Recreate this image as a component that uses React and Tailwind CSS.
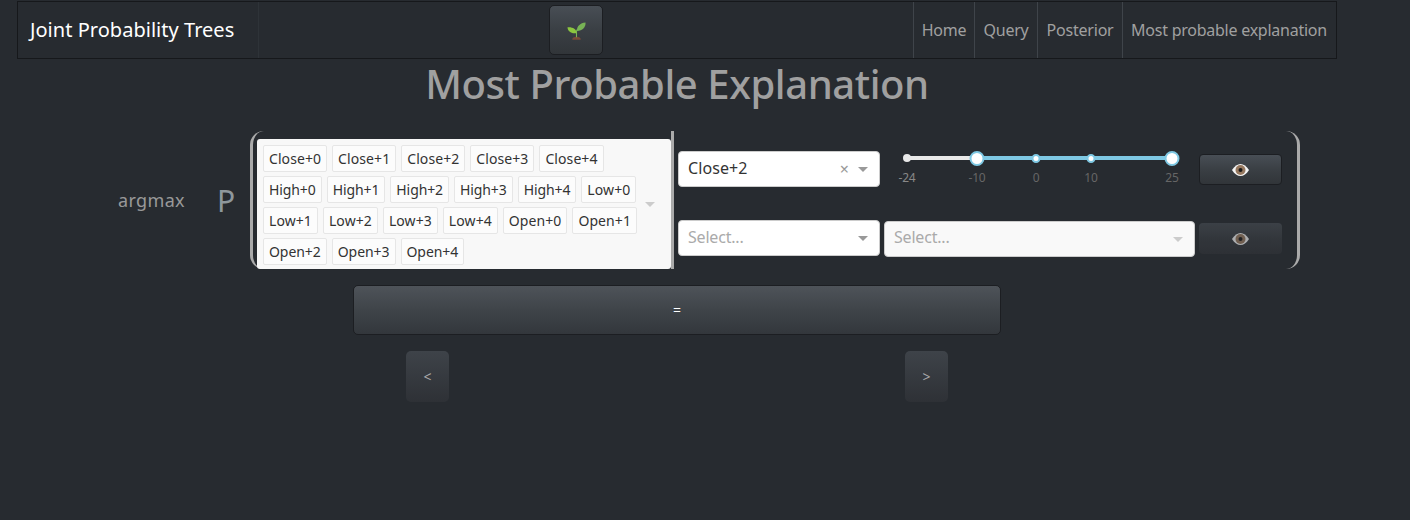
import React from "react";

const tagRows = [
  ["Close+0", "Close+1", "Close+2", "Close+3", "Close+4"],
  ["High+0", "High+1", "High+2", "High+3", "High+4", "Low+0"],
  ["Low+1", "Low+2", "Low+3", "Low+4", "Open+0", "Open+1"],
  ["Open+2", "Open+3", "Open+4"],
];

const tagTracking = (t) => {
  if (t.startsWith("High")) return "tracking-[-0.1px]";
  if (t === "Open+2" || t === "Open+3" || t === "Open+4") return "tracking-[-0.06px]";
  return "";
};

const Caret = ({ color = "#999" }) => (
  <svg width="10" height="5" viewBox="0 0 10 5" className="shrink-0">
    <path d="M0 0H10L5 5Z" fill={color} />
  </svg>
);

const Seedling = () => (
  <svg width="19" height="19" viewBox="0 0 36 36">
    <path d="M26 35c0-3-3-5-8-5s-8 2-8 5c0 1 16 1 16 0z" fill="#7a4a38" />
    <path d="M17 31V20c0-2 1-4 2-5l1.500 1c-1 1-1.500 3-1.500 4v11z" fill="#77b255" />
    <path d="M18 23C18 15 10 11 1 12c0 8 8 13 17 11z" fill="#8cc63f" />
    <path d="M19 19C18 10 25 4 35 3c1 9-6 16-16 16z" fill="#77b255" />
  </svg>
);

const Eye = () => (
  <svg width="17" height="12" viewBox="0 0 17 12">
    <path d="M0 6C2.500 2 5.500 0 8.500 0s6 2 8.500 6c-2.500 4-5.500 6-8.500 6S2.500 10 0 6z" fill="#f5f5f5" />
    <circle cx="8.500" cy="6" r="5" fill="#96785f" />
    <circle cx="8.500" cy="6" r="2" fill="#1a1a1a" />
  </svg>
);

const Mark = ({ x, label, big }) => (
  <>
    <span
      className={
        big
          ? "absolute top-0 w-[15px] h-[15px] -translate-x-1/2 rounded-full bg-white border-[2px] border-[#7ec8e3]"
          : "absolute top-[3px] w-[9px] h-[9px] -translate-x-1/2 rounded-full bg-white border-[2px] border-[#7ec8e3]"
      }
      style={{ left: x }}
    />
    <span className="absolute top-[20px] -translate-x-1/2 text-[12px] leading-[14px] text-[#666]" style={{ left: x }}>
      {label}
    </span>
  </>
);

export default function App() {
  return (
    <div className="min-h-[520px] bg-[#272b30] font-['Noto_Sans',sans-serif] text-[#999] tracking-[-0.2px]">
      <div className="w-[1320px] ml-[17px] pt-px">
        <nav className="h-[58px] flex items-stretch border border-[#16181b]">
          <div className="w-[241px] flex items-center pl-[12px] border-r border-[#2e3338] text-[20px] text-white tracking-[0.03px]">
            Joint Probability Trees
          </div>
          <div className="ml-[290px] flex items-center">
            <button className="shrink-0 w-[54px] h-[50px] flex items-center justify-center rounded-[5px] border border-[#1c1e22] bg-gradient-to-b from-[#484e55] via-[#3a3f44] to-[#313539]">
              <Seedling />
            </button>
          </div>
          <div className="ml-auto flex text-[16px] text-[#a0a0a0]">
            {[
              ["Home", "w-[61px]"],
              ["Query", "w-[63px]"],
              ["Posterior", "w-[85px]"],
              ["Most probable explanation", "w-[214px] pr-px tracking-[-0.25px]"],
            ].map(([t, w]) => (
              <div key={t} className={`${w} flex items-center justify-center border-l border-[#3f444a] whitespace-nowrap`}>
                {t}
              </div>
            ))}
          </div>
        </nav>

        <h1 className="h-[50px] leading-[49px] mb-[22px] text-center text-[40px] font-medium text-[#a0a0a0] tracking-[-0.42px]">
          Most Probable Explanation
        </h1>

        <div className="flex items-center ml-[101px]">
          <div className="w-[100px] text-[18px] tracking-[0.35px]">argmax</div>
          <div className="w-[32px] text-[30px] text-[#8e979c] -ml-px mr-px">P</div>
          <div className="w-[1050px] h-[138px] flex rounded-[14px] border-x-[3px] border-[#aaa]">
            <div className="ml-[4px] w-[417px] flex border-r-[3px] border-[#aaa]">
              <div className="mt-[8px] w-[414px] h-[130px] rounded-[3px] bg-[#f8f8f8] flex items-center pl-[6px] pr-[16px] text-[14px] text-[#333] tracking-[0.08px]">
                <div className="flex-1 flex flex-col gap-[3.500px] pt-[2px]">
                  {tagRows.map((row, i) => (
                    <div key={i} className="flex gap-[5px]">
                      {row.map((t) => (
                        <span key={t} className={`h-[27.500px] leading-[26px] px-[5px] rounded-[2px] border border-[#e6e6e6] bg-[#fcfcfc] whitespace-nowrap ${tagTracking(t)}`}>
                          {t}
                        </span>
                      ))}
                    </div>
                  ))}
                </div>
                <Caret color="#ccc" />
              </div>
            </div>
            <div className="ml-[4px] w-[604px] flex flex-col">
              <div className="mt-[20px] h-[36px] flex items-start">
                <div className="w-[202px] h-[36px] rounded bg-white border border-[#ccc] flex items-center pl-[9px] pr-[11px] text-[16px] leading-[22px] text-[#333] tracking-[0.1px]">
                  <span className="flex-1 -mt-[2px]">Close+2</span>
                  <span className="mr-[9px] text-[#999] text-[16px] leading-none">×</span>
                  <Caret />
                </div>
                <div className="relative ml-[18px] mr-[19px] w-[282px] h-[36px] text-[12px]">
                  <div className="absolute left-[9px] top-[5px] w-[70px] h-[4px] bg-[#e9e9e9]" />
                  <div className="absolute left-[79px] top-[5px] w-[195px] h-[4px] bg-[#7ec8e3]" />
                  <span className="absolute left-[5px] top-[3px] w-[8px] h-[8px] rounded-full bg-[#e9e9e9]" />
                  <span className="absolute top-[20px] left-[9px] -translate-x-1/2 leading-[14px] text-[#888]">-24</span>
                  <Mark x={79} label="-10" big />
                  <Mark x={138} label="0" />
                  <Mark x={193} label="10" />
                  <Mark x={274} label="25" big />
                </div>
                <button className="mt-[3px] w-[83px] h-[31px] flex items-center justify-center rounded border border-[#1c1e22] bg-gradient-to-b from-[#484e55] via-[#3a3f44] to-[#313539]">
                  <Eye />
                </button>
              </div>
              <div className="mt-[33px] flex items-start">
                <div className="w-[202px] h-[36px] rounded bg-white border border-[#ccc] flex items-center pl-[9px] pr-[11px] text-[16px] leading-[22px] text-[#aaa]">
                  <span className="flex-1 -mt-[2px]">Select...</span>
                  <Caret />
                </div>
                <div className="mt-px ml-[4px] w-[311px] h-[36px] rounded bg-[#f9f9f9] border border-[#ccc] flex items-center pl-[9px] pr-[11px] text-[16px] leading-[22px] text-[#aaa]">
                  <span className="flex-1 -mt-[4px]">Select...</span>
                  <Caret color="#ccc" />
                </div>
                <button className="mt-[3px] ml-[4px] w-[83px] h-[31px] flex items-center justify-center rounded bg-gradient-to-b from-[#3e4349] via-[#34383d] to-[#2e3136] opacity-90">
                  <span className="opacity-70 flex"><Eye /></span>
                </button>
              </div>
            </div>
          </div>
        </div>

        <button className="block mx-auto mt-[16px] w-[648px] h-[50px] rounded-[5px] border border-[#1c1e22] bg-gradient-to-b from-[#4e5359] via-[#3f4449] to-[#33373c] text-white text-[14px] leading-[44px]">
          =
        </button>

        <div className="mx-auto mt-[16px] w-[542px] flex justify-between">
          <button className="w-[43px] h-[51px] rounded-[5px] bg-gradient-to-b from-[#3e4349] to-[#2e3136] text-[#aaa] text-[14px]">&lt;</button>
          <button className="w-[43px] h-[51px] rounded-[5px] bg-gradient-to-b from-[#3e4349] to-[#2e3136] text-[#aaa] text-[14px]">&gt;</button>
        </div>
      </div>
    </div>
  );
}
